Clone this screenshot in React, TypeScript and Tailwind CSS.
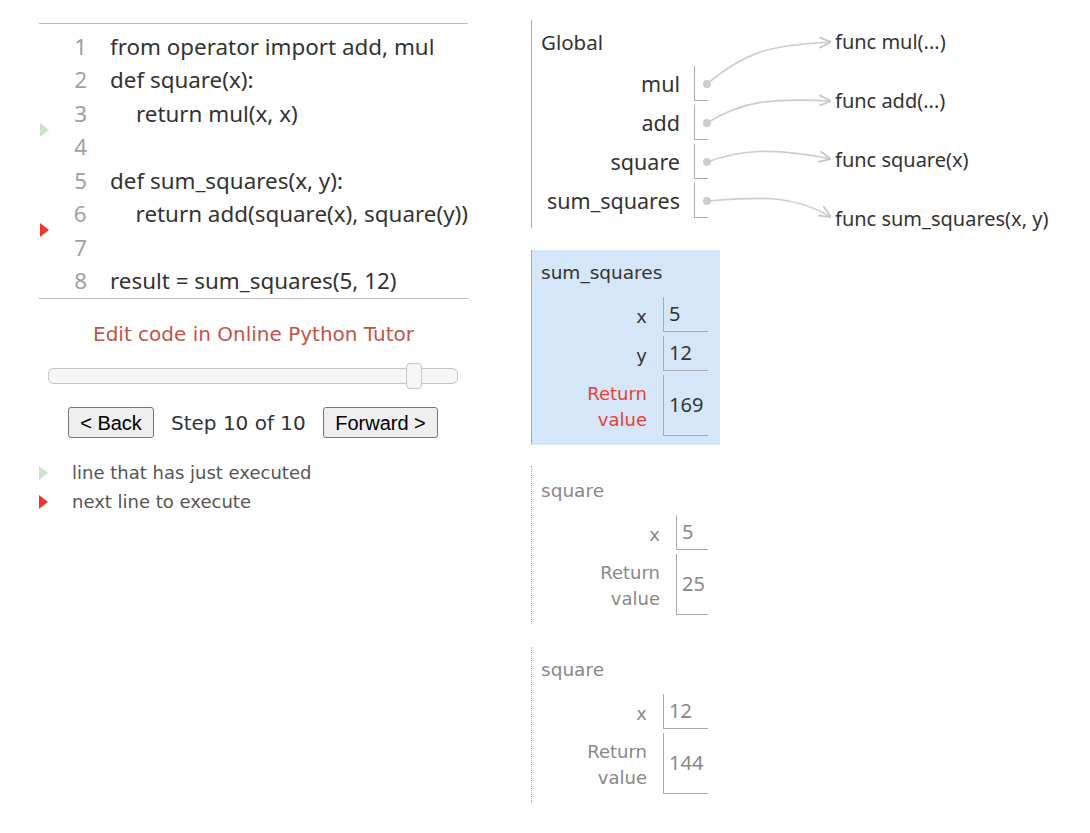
const CODE: [number, string, boolean][] = [
  [1, "from operator import add, mul", false],
  [2, "def square(x):", false],
  [3, "return mul(x, x)", true],
  [4, "", false],
  [5, "def sum_squares(x, y):", false],
  [6, "return add(square(x), square(y))", true],
  [7, "", false],
  [8, "result = sum_squares(5, 12)", false],
];

const GLOBALS = ["mul", "add", "square", "sum_squares"];
const FUNCS = ["func mul(...)", "func add(...)", "func square(x)", "func sum_squares(x, y)"];

const sans = "font-['Noto_Sans',sans-serif]";
const verd = "font-['DejaVu_Sans',sans-serif]";

function Arrow({ color, className }: { color: string; className?: string }) {
  return (
    <svg width="9" height="14" viewBox="0 0 9 14" className={className}>
      <polygon points="0,0 9,7 0,14" fill={color} />
    </svg>
  );
}

function Cell({ w, active, children }: { w: string; active: boolean; children: React.ReactNode }) {
  return (
    <div
      className={`${w} h-full border-l border-b border-[#aaa] pl-[5px] flex items-center text-[20px] ${sans} ${active ? "text-[#333]" : "text-[#888]"}`}
    >
      {children}
    </div>
  );
}

function Frame({
  name,
  vars,
  ret,
  active,
  cellW,
  headH,
  headPt,
  className,
}: {
  name: string;
  vars: [string, string][];
  ret: string;
  active: boolean;
  cellW: string;
  headH: string;
  headPt: string;
  className?: string;
}) {
  const tone = active ? "text-[#333]" : "text-[#888]";
  return (
    <div
      className={`w-[189px] border-l border-[#aaa] pb-[9px] ${active ? "bg-[#d6e6f9]" : "border-dotted"} ${verd} text-[18px] ${className ?? ""}`}
    >
      <div className={`${headH} ${headPt} pl-[9px] leading-[26px] text-[18.5px] ${tone}`}>{name}</div>
      <div className="flex flex-col items-end pr-[12px] gap-[4px]">
        {vars.map(([k, v]) => (
          <div key={k} className="flex h-[35px] items-center">
            <span className={`mr-[16px] pt-[3px] ${tone}`}>{k}</span>
            <Cell w={cellW} active={active}>{v}</Cell>
          </div>
        ))}
        <div className="flex h-[61px] items-center">
          <span className={`mr-[16px] pt-[2px] text-right leading-[26px] ${active ? "text-[#e93f34]" : "text-[#888]"}`}>
            Return
            <br />
            value
          </span>
          <Cell w={cellW} active={active}>{ret}</Cell>
        </div>
      </div>
    </div>
  );
}

export default function App() {
  return (
    <div className="relative w-[1090px] h-[833px] bg-white flex pt-[20px] overflow-hidden">
      {/* left: code + controls */}
      <div className="ml-[39px] w-[429px] mt-[3px]">
        <div className={`relative border-y border-[#bbb] pt-[6px] ${sans} text-[22.4px]`}>
          {CODE.map(([n, text, indent]) => (
            <div key={n} className="flex h-[33.5px] items-center">
              <span className="w-[48px] text-right text-[#a0a0a0]">{n}</span>
              <span className={`ml-[23px] text-[#333] whitespace-pre ${indent ? "pl-[26px]" : ""}`}>{text}</span>
            </div>
          ))}
          <Arrow color="#c8e5c8" className="absolute left-[1px] top-[99px]" />
          <Arrow color="#e8392f" className="absolute left-[1px] top-[199px]" />
        </div>

        <div className={`mt-[22px] text-center text-[20px] leading-[26px] text-[#c0554a] ${verd}`}>
          Edit code in Online Python Tutor
        </div>

        <div className="relative ml-[9px] mt-[21px] w-[410px] h-[16px] rounded-[6px] border border-[#c5c5c5] bg-[#f6f6f6]">
          <div className="absolute left-[357px] top-[-6px] w-[16px] h-[26px] rounded-[4px] border border-[#c5c5c5] bg-[#f6f6f6]" />
        </div>

        <div className="flex items-center mt-[23px] h-[31px]">
          <button className="ml-[29px] w-[86px] h-[31px] rounded-[3px] border border-[#767676] bg-[#efefef] text-[20px] text-black font-['Liberation_Sans',sans-serif]">
            &lt; Back
          </button>
          <span className={`ml-[17px] text-[20px] text-[#333] ${verd}`}>Step 10 of 10</span>
          <button className="ml-auto mr-[30px] w-[115px] h-[31px] rounded-[3px] border border-[#767676] bg-[#efefef] text-[20px] text-black font-['Liberation_Sans',sans-serif]">
            Forward &gt;
          </button>
        </div>

        <div className={`mt-[20px] text-[18px] text-[#555] ${verd}`}>
          <div className="flex items-center h-[29px]">
            <Arrow color="#c8e5c8" className="shrink-0" />
            <span className="ml-[24px]">line that has just executed</span>
          </div>
          <div className="flex items-center h-[29px]">
            <Arrow color="#e8392f" className="shrink-0" />
            <span className="ml-[24px]">next line to execute</span>
          </div>
        </div>
      </div>

      {/* right: frames */}
      <div className="ml-[63px] w-[189px]">
        <div className={`border-l border-[#aaa] pb-[10px] ${sans} text-[21.5px] text-[#333]`}>
          <div className="h-[46px] pt-[8px] pl-[9px] leading-[28px] text-[20.5px]">Global</div>
          <div className="flex flex-col items-end pr-[12px] gap-[4px]">
            {GLOBALS.map((g) => (
              <div key={g} className="flex h-[35px] items-center">
                <span className="mr-[14px] pt-[2px]">{g}</span>
                <div className="w-[14px] h-full border-l border-b border-[#aaa]" />
              </div>
            ))}
          </div>
        </div>

        <Frame
          name="sum_squares"
          vars={[["x", "5"], ["y", "12"]]}
          ret="169"
          active
          cellW="w-[45px]"
          headH="h-[47px]"
          headPt="pt-[10px]"
          className="mt-[22px]"
        />
        <Frame
          name="square"
          vars={[["x", "5"]]}
          ret="25"
          active={false}
          cellW="w-[32px]"
          headH="h-[49px]"
          headPt="pt-[12px]"
          className="mt-[21px]"
        />
        <Frame
          name="square"
          vars={[["x", "12"]]}
          ret="144"
          active={false}
          cellW="w-[45px]"
          headH="h-[47px]"
          headPt="pt-[10px]"
          className="mt-[23px]"
        />
      </div>

      {/* heap */}
      <div className={`ml-[115px] ${sans} text-[20px] text-[#333]`}>
        {FUNCS.map((f) => (
          <div key={f} className="h-[59px] pt-[8px] leading-[28px] whitespace-nowrap">
            {f}
          </div>
        ))}
      </div>

      {/* pointer arrows */}
      <svg className="absolute left-0 top-0 pointer-events-none" width="1090" height="260">
        <defs>
          <marker id="head" viewBox="0 0 10 10" refX="10" refY="5" markerWidth="12" markerHeight="12" markerUnits="userSpaceOnUse" orient="auto">
            <path d="M0 0.5 L10 5 L0 9.5" fill="none" stroke="#c8c8c8" strokeWidth="1.5" />
          </marker>
        </defs>
        <g fill="none" stroke="#cccccc" strokeWidth="1.6">
          <path d="M707 84 C 745 52, 770 45, 831 42" markerEnd="url(#head)" />
          <path d="M707 123 C 742 101, 770 98, 831 101" markerEnd="url(#head)" />
          <path d="M707 162 C 740 150, 772 147, 831 159" markerEnd="url(#head)" />
          <path d="M707 201 C 760 197, 792 194, 831 217" markerEnd="url(#head)" />
        </g>
        <g fill="#cccccc">
          <circle cx="707" cy="84" r="4" />
          <circle cx="707" cy="123" r="4" />
          <circle cx="707" cy="162" r="4" />
          <circle cx="707" cy="201" r="4" />
        </g>
      </svg>
    </div>
  );
}
